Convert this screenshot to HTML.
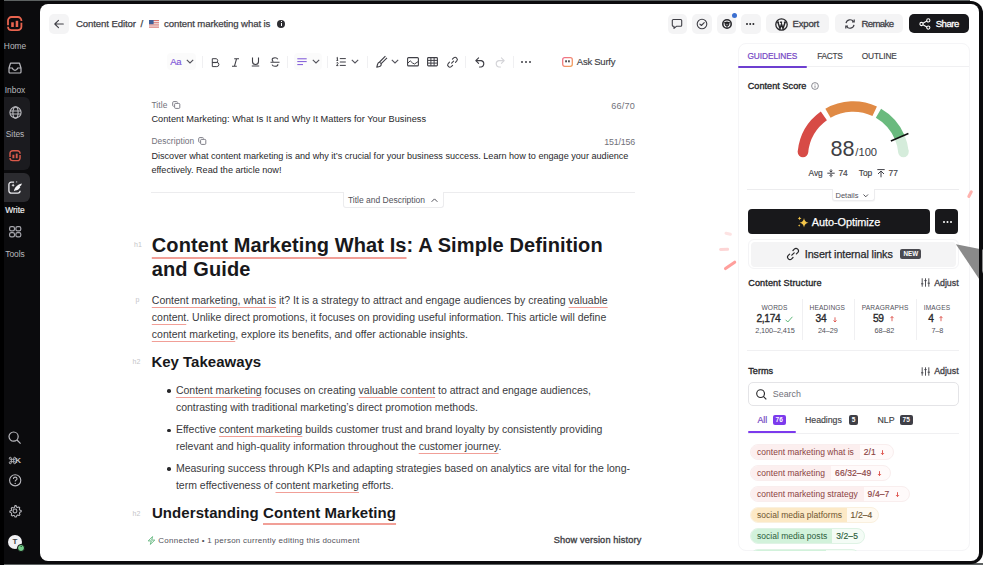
<!DOCTYPE html>
<html><head><meta charset="utf-8">
<style>
*{box-sizing:border-box;margin:0;padding:0}
html,body{width:983px;height:565px;overflow:hidden;background:#fff;font-family:"Liberation Sans",sans-serif;-webkit-font-smoothing:antialiased}
.a{position:absolute}
.t{position:absolute;white-space:nowrap;line-height:12px}
svg{position:absolute;overflow:visible}
#strip-top{left:0;top:0;width:970px;height:2px;background:#5d6262}
#strip-bot{left:0;top:563px;width:983px;height:2px;background:#5d6262}
#frame{left:-20px;top:1px;width:1003px;height:563px;background:#0b0b0d;border-radius:12px}
#blk{left:0;top:0;width:4px;height:565px;background:#000}
#panel{left:39.5px;top:4px;width:939.5px;height:557px;background:#fff;border-radius:8px}
.lbl{font-size:8.4px;color:#71717a;letter-spacing:0.1px}
.tag{font-size:7px;color:#c4c4c8}
.h1{font-size:20px;font-weight:700;line-height:24.5px;color:#18181b;white-space:nowrap;letter-spacing:0.1px}
.h2{font-size:15px;font-weight:700;line-height:20px;color:#18181b;white-space:nowrap}
.para{font-size:10.5px;line-height:17.2px;color:#3a3a40;white-space:nowrap}
.u{text-decoration:underline;text-decoration-skip-ink:none;text-decoration-color:#f19f97;text-underline-offset:2.6px;text-decoration-thickness:1.3px}
.h1 .u,.h2 .u{text-underline-offset:5px;text-decoration-thickness:1.5px}
.bul{width:3.6px;height:3.6px;border-radius:50%;background:#27272a}
.stl{font-size:6.6px;color:#52525b;letter-spacing:0.15px}
.stn{font-size:10.2px;color:#27272a;top:313.4px;letter-spacing:-0.3px;-webkit-text-stroke:0.35px #27272a}
.str{font-size:7.3px;color:#52525b;top:324.8px;letter-spacing:-0.1px}
.bdg{height:10.5px;border-radius:2px;color:#fff;font-size:6.5px;font-weight:700;text-align:center;line-height:10.5px}
.side{color:#b9b9be;font-size:8.4px;text-align:center;width:30px;left:0}
</style></head><body>
<div id="strip-top" class="a"></div>
<div id="strip-bot" class="a"></div>
<div id="frame" class="a"></div>
<div id="blk" class="a"></div>

<!-- SIDEBAR -->
<div id="sidebar">
<!-- logo -->
<svg style="left:7px;top:16px" width="16" height="16" viewBox="0 0 16 16">
<path d="M1 10.8A3.5 3.5 0 0 0 4.5 14.2H10.9A3.5 3.5 0 0 0 14.4 10.7V6.7M14.4 5.1V4.5A3.5 3.5 0 0 0 10.9 1H4.5A3.5 3.5 0 0 0 1 4.5V9.2" fill="none" stroke="#e8644f" stroke-width="1.8"/>
<rect x="4.2" y="6.3" width="2.6" height="4.7" fill="#e8644f"/><rect x="8.7" y="4.8" width="2.5" height="6.2" fill="#e8644f"/>
</svg>
<div class="t side" style="top:40px">Home</div>
<svg style="left:8px;top:62px" width="14" height="12" viewBox="0 0 14 12">
<path d="M1 6 L2.5 1.2 H11.5 L13 6 V10 a1 1 0 0 1-1 1 H2 a1 1 0 0 1-1-1Z M1 6 H4.3 Q5 8.3 7 8.3 Q9 8.3 9.7 6 H13" fill="none" stroke="#b9b9be" stroke-width="1.2" stroke-linejoin="round"/>
</svg>
<div class="t side" style="top:84px">Inbox</div>
<div class="a" style="left:4px;top:97px;width:26px;height:73px;background:#1b1b1f;border-radius:0 6px 6px 0"></div>
<svg style="left:9px;top:105.5px" width="13" height="13" viewBox="0 0 13 13">
<circle cx="6.5" cy="6.5" r="5.6" fill="none" stroke="#b9b9be" stroke-width="1.1"/>
<ellipse cx="6.5" cy="6.5" rx="2.6" ry="5.6" fill="none" stroke="#b9b9be" stroke-width="1.1"/>
<path d="M1 5H12M1 8H12" stroke="#b9b9be" stroke-width="1.1"/>
</svg>
<div class="t side" style="top:128px">Sites</div>
<svg style="left:8.5px;top:149.8px" width="12.5" height="12" viewBox="0 0 16 16">
<path d="M1 10.8A3.5 3.5 0 0 0 4.5 14.2H10.9A3.5 3.5 0 0 0 14.4 10.7V6.7M14.4 5.1V4.5A3.5 3.5 0 0 0 10.9 1H4.5A3.5 3.5 0 0 0 1 4.5V9.2" fill="none" stroke="#d9594a" stroke-width="1.9"/>
<rect x="4.2" y="6.3" width="2.6" height="4.7" fill="#d9594a"/><rect x="8.7" y="4.8" width="2.5" height="6.2" fill="#d9594a"/>
</svg>
<div class="a" style="left:4px;top:173px;width:25.5px;height:29px;background:#2b2b2f;border-radius:0 6px 6px 0"></div>
<svg style="left:8px;top:181px" width="15" height="13" viewBox="0 0 15 13">
<path d="M6.1 1.2H3.2a2.3 2.3 0 0 0-2.3 2.3V9.8a2.3 2.3 0 0 0 2.3 2.3H9.8a2.3 2.3 0 0 0 2.3-2.3V10" fill="none" stroke="#ececef" stroke-width="1.3"/>
<path d="M5.1 2.6Q5.4 4 6.8 4.3Q5.4 4.6 5.1 6Q4.8 4.6 3.4 4.3Q4.8 4 5.1 2.6Z" fill="#ececef"/>
<circle cx="8.6" cy="0.9" r="0.8" fill="#8f8f94"/>
<path d="M5.9 10.3C6.3 7.5 8.5 3.8 13.9 2.6C13.6 4.2 12.8 5.2 11.6 5.6L12.4 5.9C11.5 7.8 9.5 9.4 7.2 9.6Z" fill="#f4f4f6"/>
</svg>
<div class="t side" style="top:204px;color:#f4f4f5;-webkit-text-stroke:0.15px #f4f4f5">Write</div>
<svg style="left:8.7px;top:225.6px" width="12.4" height="11.6" viewBox="0 0 12.4 11.6">
<rect x="0.6" y="0.6" width="4.9" height="4.2" rx="1.6" fill="none" stroke="#a6a6ac" stroke-width="1.2"/>
<rect x="6.9" y="0.6" width="4.9" height="4.2" rx="1.6" fill="none" stroke="#a6a6ac" stroke-width="1.2"/>
<rect x="0.6" y="6.7" width="4.9" height="4.2" rx="1.6" fill="none" stroke="#a6a6ac" stroke-width="1.2"/>
<rect x="6.9" y="6.7" width="4.9" height="4.2" rx="1.6" fill="none" stroke="#a6a6ac" stroke-width="1.2"/>
</svg>
<div class="t side" style="top:247.5px">Tools</div>

<svg style="left:8px;top:431px" width="14" height="14" viewBox="0 0 14 14">
<circle cx="5.6" cy="5.6" r="4.6" fill="none" stroke="#b9b9be" stroke-width="1.2"/>
<path d="M9 9L12.6 12.6" stroke="#b9b9be" stroke-width="1.2"/>
</svg>
<svg style="left:8.5px;top:456.5px" width="7" height="7" viewBox="0 0 7 7"><path d="M2.3 2.3H4.7V4.7H2.3ZM2.3 2.3V1.5A1 1 0 1 0 1.5 2.3H2.3M4.7 2.3H5.5A1 1 0 1 0 4.7 1.5V2.3M4.7 4.7V5.5A1 1 0 1 0 5.5 4.7H4.7M2.3 4.7H1.5A1 1 0 1 0 2.3 5.5V4.7" fill="none" stroke="#c4c4c8" stroke-width="0.9"/></svg>
<div class="t" style="left:15.2px;top:454.5px;font-size:8px;font-weight:700;color:#c4c4c8">K</div>
<svg style="left:8.5px;top:474px" width="13" height="13" viewBox="0 0 13 13">
<circle cx="6.2" cy="6.3" r="5.6" fill="none" stroke="#b9b9be" stroke-width="1.1"/>
<path d="M4.4 5 Q4.4 3.1 6.2 3.1 Q8 3.1 8 4.7 Q8 5.8 6.8 6.3 Q6.2 6.6 6.2 7.6" fill="none" stroke="#b9b9be" stroke-width="1.1"/>
<circle cx="6.2" cy="9.4" r="0.7" fill="#b9b9be"/>
</svg>
<svg style="left:7.7px;top:504px" width="14" height="14" viewBox="0 0 24 24">
<path d="M12 2.5l2 .3.6 2.4 1.5.8 2.3-1 1.7 1.4-.6 2.5.7 1.5 2.4.8v2.2l-2.4.9-.6 1.5.9 2.4-1.5 1.6-2.4-.8-1.5.8-.8 2.4-2.2.2-1-2.3-1.6-.6-2.3 1-1.6-1.4.8-2.4-.7-1.5-2.4-.9v-2.2l2.4-.9.7-1.5-.9-2.4 1.5-1.5 2.4.9 1.5-.7.9-2.4z" fill="none" stroke="#b9b9be" stroke-width="1.8" stroke-linejoin="round"/>
<circle cx="12" cy="12" r="3.3" fill="none" stroke="#b9b9be" stroke-width="1.8"/>
</svg>
<div class="a" style="left:8px;top:534.5px;width:14px;height:14px;border-radius:50%;background:#f2f2f4"></div>
<div class="t" style="left:8px;top:535.5px;width:14px;text-align:center;font-size:8px;font-weight:700;color:#444">T</div>
<div class="a" style="left:16.6px;top:543.6px;width:8.6px;height:8.6px;border-radius:50%;background:#74cd8a;border:0.6px solid #0b0b0d"></div><div class="a" style="left:19.6px;top:546.3px;width:2.6px;height:3.4px;border-top:1px solid #2d6a3c;border-left:0.9px solid transparent"></div>
</div>

<div id="panel" class="a"></div>

<!-- HEADER -->
<div id="header">
<div class="a" style="left:49px;top:14px;width:20px;height:20px;background:#f4f4f5;border-radius:5px"></div>
<svg style="left:53px;top:18px" width="12" height="12" viewBox="0 0 12 12">
<path d="M10.3 6H1.9M5.5 2.3L1.8 6L5.5 9.7" fill="none" stroke="#3f3f46" stroke-width="1.1" stroke-linecap="round" stroke-linejoin="round"/>
</svg>
<div class="t" style="left:76px;top:18px;font-size:9.6px;color:#3f3f46;letter-spacing:-0.1px;-webkit-text-stroke:0.25px #3f3f46">Content Editor</div>
<div class="t" style="left:140.5px;top:18px;font-size:9.6px;color:#3f3f46;-webkit-text-stroke:0.25px #3f3f46">/</div>
<svg style="left:149px;top:19.8px" width="10" height="7.7" viewBox="0 0 10 7.7">
<rect width="10" height="7.7" fill="#f3f3f3"/>
<rect y="0" width="10" height="1.1" fill="#d8736f"/><rect y="2.2" width="10" height="1.1" fill="#d8736f"/><rect y="4.4" width="10" height="1.1" fill="#d8736f"/><rect y="6.6" width="10" height="1.1" fill="#d8736f"/>
<rect width="4.6" height="4.2" fill="#3f5f98"/>
</svg>
<div class="t" style="left:164px;top:18px;font-size:9.6px;color:#3f3f46;letter-spacing:-0.1px;-webkit-text-stroke:0.25px #3f3f46">content marketing what is</div>
<div class="a" style="left:277.3px;top:19.9px;width:8.2px;height:8.2px;border-radius:50%;background:#2f2f33"></div>
<div class="a" style="left:280.8px;top:23.2px;width:1.3px;height:3.2px;background:#fff"></div>
<div class="a" style="left:280.8px;top:21.3px;width:1.3px;height:1.2px;background:#fff"></div>

<div class="a" style="left:667.5px;top:14.3px;width:19.5px;height:19.5px;background:#f4f4f5;border-radius:5px"></div>
<svg style="left:671px;top:18px" width="12" height="12" viewBox="0 0 12 12">
<path d="M1.3 2.5a1 1 0 0 1 1-1h7.4a1 1 0 0 1 1 1v4.8a1 1 0 0 1-1 1H5.4L3 10.4V8.3H2.3a1 1 0 0 1-1-1Z" fill="none" stroke="#3f3f46" stroke-width="1.1" stroke-linejoin="round"/>
</svg>
<div class="a" style="left:692px;top:14.3px;width:19.5px;height:19.5px;background:#f4f4f5;border-radius:5px"></div>
<svg style="left:696px;top:18px" width="12" height="12" viewBox="0 0 12 12">
<circle cx="6" cy="6" r="4.8" fill="none" stroke="#3f3f46" stroke-width="1.1"/>
<path d="M3.9 6.1L5.4 7.5L8.2 4.6" fill="none" stroke="#3f3f46" stroke-width="1.1" stroke-linecap="round" stroke-linejoin="round"/>
</svg>
<div class="a" style="left:716.5px;top:14.3px;width:19.5px;height:19.5px;background:#f4f4f5;border-radius:5px"></div>
<svg style="left:720.5px;top:18.3px" width="12" height="12" viewBox="0 0 12 12">
<circle cx="6" cy="6" r="4.2" fill="none" stroke="#2a2a2e" stroke-width="1.6"/>
<circle cx="6" cy="6" r="1.8" fill="none" stroke="#2a2a2e" stroke-width="1.2"/>
<path d="M3 4.5L6 6L9 4.5M6 6V9.8" stroke="#2a2a2e" stroke-width="1"/>
</svg>
<div class="a" style="left:732.3px;top:12.5px;width:5px;height:5px;border-radius:50%;background:#3b6fd0"></div>
<div class="a" style="left:741px;top:14.3px;width:19.5px;height:19.5px;background:#f4f4f5;border-radius:5px"></div>
<div class="a" style="left:746.3px;top:23px;width:2.2px;height:2.2px;border-radius:50%;background:#27272a;box-shadow:3.2px 0 0 #27272a,6.4px 0 0 #27272a"></div>

<div class="a" style="left:765.6px;top:14.3px;width:63.4px;height:19px;background:#f4f4f5;border-radius:5px"></div>
<svg style="left:774.8px;top:17.5px" width="13" height="13" viewBox="0 0 13 13">
<circle cx="6.5" cy="6.5" r="5.7" fill="none" stroke="#27272a" stroke-width="1.3"/>
<path d="M2.9 4.2L5 10.4L6.5 6.3L8 10.4L10.1 4.2M2.1 4.2H4.1M5.1 4.2H7.1M8.9 4.2H10.9" fill="none" stroke="#27272a" stroke-width="1.5"/>
</svg>
<div class="t" style="left:792.5px;top:18px;font-size:9.6px;color:#3f3f46;letter-spacing:-0.2px;-webkit-text-stroke:0.3px #3f3f46">Export</div>

<div class="a" style="left:834.5px;top:14.3px;width:68.7px;height:19px;background:#f4f4f5;border-radius:5px"></div>
<svg style="left:844px;top:18px" width="12" height="12" viewBox="0 0 12 12">
<path d="M2 5.2A4.2 4.2 0 0 1 9.6 3.6M10 6.8A4.2 4.2 0 0 1 2.4 8.4" fill="none" stroke="#3f3f46" stroke-width="1.2"/>
<path d="M8 3.8H10.2V1.6M4 8.2H1.8V10.4" fill="none" stroke="#3f3f46" stroke-width="1.2"/>
</svg>
<div class="t" style="left:861.4px;top:18px;font-size:9.6px;color:#3f3f46;letter-spacing:-0.6px;-webkit-text-stroke:0.3px #3f3f46">Remake</div>

<div class="a" style="left:908.8px;top:14.3px;width:60.5px;height:19px;background:#18181b;border-radius:5px"></div>
<svg style="left:919px;top:18px" width="12" height="12" viewBox="0 0 12 12">
<circle cx="9.3" cy="2.4" r="1.6" fill="none" stroke="#fff" stroke-width="1.1"/>
<circle cx="2.5" cy="6" r="1.6" fill="none" stroke="#fff" stroke-width="1.1"/>
<circle cx="9.3" cy="9.6" r="1.6" fill="none" stroke="#fff" stroke-width="1.1"/>
<path d="M3.9 5.2L7.9 3.1M3.9 6.8L7.9 8.9" stroke="#fff" stroke-width="1.1"/>
</svg>
<div class="t" style="left:935.7px;top:18px;font-size:9.6px;color:#fff;letter-spacing:-0.5px;-webkit-text-stroke:0.3px #fff">Share</div>
</div>

<!-- TOOLBAR -->
<div id="toolbar">
<div class="a" style="left:167.3px;top:53.3px;width:29px;height:16.5px;background:#fbfbfb;border-radius:4px"></div>
<div class="t" style="left:170.3px;top:55.7px;font-size:9.5px;color:#7d55d8;letter-spacing:-0.3px;-webkit-text-stroke:0.15px #7d55d8">Aa</div>
<svg style="left:186px;top:59px" width="8" height="5" viewBox="0 0 8 5"><path d="M0.8 0.8L4 4L7.2 0.8" fill="none" stroke="#52525b" stroke-width="1.1"/></svg>
<div class="a" style="left:201.8px;top:55.5px;width:1px;height:12px;background:#f0f0f2"></div>
<!-- B -->
<svg style="left:211px;top:57.5px" width="10" height="9" viewBox="0 0 10 9">
<path d="M1.3 0.7H5.2a2 2 0 0 1 0 3.9H1.3ZM1.3 4.4H5.8a2.1 2.1 0 0 1 0 4.2H1.3Z" fill="none" stroke="#3f3f46" stroke-width="1.0" stroke-linejoin="round"/>
</svg>
<!-- I -->
<svg style="left:231px;top:57.5px" width="9" height="9" viewBox="0 0 9 9">
<path d="M3.2 0.7H8M1 8.3H5.8M5.6 0.7L3.4 8.3" fill="none" stroke="#3f3f46" stroke-width="1.1"/>
</svg>
<!-- U -->
<svg style="left:251px;top:57.3px" width="9" height="10" viewBox="0 0 9 10">
<path d="M1.5 0.5V4.5a3 3 0 0 0 6 0V0.5M0.8 9H8.2" fill="none" stroke="#3f3f46" stroke-width="1.1"/>
</svg>
<!-- S -->
<svg style="left:269.5px;top:57.3px" width="10" height="10" viewBox="0 0 10 10">
<path d="M7.8 2.2C7.3 1.2 6.3 0.7 5 0.7C3.3 0.7 2.2 1.5 2.2 2.8C2.2 3.6 2.6 4.1 3.3 4.5M7.9 7.2C7.9 8.6 6.7 9.3 5 9.3C3.5 9.3 2.4 8.6 2 7.6M0.5 5.3H9.5" fill="none" stroke="#3f3f46" stroke-width="1.1"/>
</svg>
<div class="a" style="left:287.3px;top:55.5px;width:1px;height:12px;background:#f0f0f2"></div>
<div class="a" style="left:293.6px;top:53.3px;width:28.4px;height:16.5px;background:#fbfbfb;border-radius:4px"></div>
<svg style="left:296.6px;top:57.8px" width="10" height="8" viewBox="0 0 10 8">
<path d="M0.3 0.8H9.7M0.3 3.6H9.7M0.3 6.6H6" stroke="#7d55d8" stroke-width="1.0"/>
</svg>
<svg style="left:311.5px;top:59px" width="8" height="5" viewBox="0 0 8 5"><path d="M0.8 0.8L4 4L7.2 0.8" fill="none" stroke="#52525b" stroke-width="1.1"/></svg>
<div class="a" style="left:327.3px;top:55.5px;width:1px;height:12px;background:#f0f0f2"></div>
<!-- list -->
<svg style="left:336.3px;top:57px" width="10" height="10" viewBox="0 0 10 10">
<path d="M0.6 0.9L1.4 0.4V3.4M0.4 3.4H2.2M0.5 6.2Q0.8 5.4 1.5 5.5Q2.3 5.7 2 6.6L0.5 8.6H2.3M3.8 1.6H9.8M3.8 5H9.8M3.8 8.4H9.8" fill="none" stroke="#3f3f46" stroke-width="1"/>
</svg>
<svg style="left:351px;top:59px" width="8" height="5" viewBox="0 0 8 5"><path d="M0.8 0.8L4 4L7.2 0.8" fill="none" stroke="#52525b" stroke-width="1.1"/></svg>
<div class="a" style="left:367.3px;top:55.5px;width:1px;height:12px;background:#f0f0f2"></div>
<!-- pen -->
<svg style="left:375.5px;top:56.5px" width="12" height="11" viewBox="0 0 12 11">
<path d="M11 0.8L5.2 6.6L3.6 5L9.4 -0.8M3.6 5Q2 5.5 1.5 7.5L0.8 10.2L3.6 9.5Q5.5 9 5.2 6.6" fill="none" stroke="#3f3f46" stroke-width="1.1" stroke-linejoin="round"/>
</svg>
<svg style="left:391px;top:59px" width="8" height="5" viewBox="0 0 8 5"><path d="M0.8 0.8L4 4L7.2 0.8" fill="none" stroke="#52525b" stroke-width="1.1"/></svg>
<!-- image -->
<svg style="left:407px;top:57px" width="12" height="9.5" viewBox="0 0 12 9.5">
<rect x="0.6" y="0.6" width="10.8" height="8.3" rx="1" fill="none" stroke="#3f3f46" stroke-width="1.1"/>
<path d="M0.8 6.2L3.2 3.8Q5.5 6.5 7.5 7L11.2 4.5" fill="none" stroke="#3f3f46" stroke-width="1"/>
</svg>
<!-- table -->
<svg style="left:427px;top:57px" width="11" height="9.5" viewBox="0 0 11 9.5">
<rect x="0.6" y="0.6" width="9.8" height="8.3" rx="0.8" fill="none" stroke="#3f3f46" stroke-width="1.1"/>
<path d="M0.6 3.4H10.4M0.6 6.1H10.4M3.9 0.6V8.9M7.1 0.6V8.9" stroke="#3f3f46" stroke-width="1"/>
</svg>
<!-- link -->
<svg style="left:446.8px;top:56.5px" width="11" height="10.5" viewBox="0 0 11 10.5">
<path d="M4.6 6.2L6.6 4.2M5.4 2.2L6.7 0.9a2.2 2.2 0 0 1 3.1 3.1L8.5 5.3M5.6 8.3L4.3 9.6a2.2 2.2 0 0 1-3.1-3.1L2.5 5.2" fill="none" stroke="#3f3f46" stroke-width="1.1" stroke-linecap="round"/>
</svg>
<div class="a" style="left:464.7px;top:55.5px;width:1px;height:12px;background:#f0f0f2"></div>
<!-- undo -->
<svg style="left:474.5px;top:56.5px" width="11" height="10.5" viewBox="0 0 11 10.5">
<path d="M3.6 0.8L0.8 3.6L3.6 6.4M1 3.6H6.3a3.3 3.3 0 0 1 0 6.4H4.5" fill="none" stroke="#3f3f46" stroke-width="1.1" stroke-linejoin="round" stroke-linecap="round"/>
</svg>
<svg style="left:493.5px;top:56.5px" width="11" height="10.5" viewBox="0 0 11 10.5">
<path d="M7.4 0.8L10.2 3.6L7.4 6.4M10 3.6H4.7a3.3 3.3 0 0 0 0 6.4H6.5" fill="none" stroke="#d4d4d8" stroke-width="1.1" stroke-linejoin="round" stroke-linecap="round"/>
</svg>
<div class="a" style="left:512.5px;top:55.5px;width:1px;height:12px;background:#f0f0f2"></div>
<div class="a" style="left:520.6px;top:60.8px;width:2px;height:2px;border-radius:50%;background:#3f3f46;box-shadow:4px 0 0 #3f3f46,8px 0 0 #3f3f46"></div>
<!-- surfy -->
<svg style="left:561.5px;top:57px" width="11" height="10" viewBox="0 0 11 10">
<defs><linearGradient id="sg" x1="0" y1="0" x2="1" y2="1"><stop offset="0" stop-color="#ef6b8a"/><stop offset="1" stop-color="#f2a45a"/></linearGradient></defs>
<rect x="0.7" y="0.7" width="9.6" height="8.6" rx="2" fill="#fff" stroke="url(#sg)" stroke-width="1.3"/>
<rect x="3.3" y="3.3" width="1.5" height="2" fill="#27272a"/><rect x="6.2" y="3.3" width="1.5" height="2" fill="#27272a"/>
</svg>
<div class="t" style="left:576.8px;top:55.8px;font-size:9.5px;color:#3f3f46;letter-spacing:-0.25px;-webkit-text-stroke:0.15px #3f3f46">Ask Surfy</div>
</div>

<!-- EDITOR -->
<div id="editor">
<div class="t lbl" style="left:151.4px;top:98.7px">Title</div>
<svg style="left:171.5px;top:100.8px" width="8.5" height="8" viewBox="0 0 8.5 8"><rect x="2.6" y="2.4" width="5.2" height="5" rx="1" fill="none" stroke="#71717a" stroke-width="0.9"/><path d="M1.6 5.4a1 1 0 0 1-0.9-1V1.6a1 1 0 0 1 1-1h2.8a1 1 0 0 1 1 0.9" fill="none" stroke="#71717a" stroke-width="0.9"/></svg>
<div class="t lbl" style="left:560px;width:75px;text-align:right;top:99.5px;font-size:9.1px;letter-spacing:0.2px">66/70</div>
<div class="t" style="left:151.4px;top:113px;font-size:9.2px;color:#27272a;letter-spacing:0.03px">Content Marketing: What Is It and Why It Matters for Your Business</div>
<div class="t lbl" style="left:151.4px;top:135.3px">Description</div>
<svg style="left:198.3px;top:137.4px" width="8.5" height="8" viewBox="0 0 8.5 8"><rect x="2.6" y="2.4" width="5.2" height="5" rx="1" fill="none" stroke="#71717a" stroke-width="0.9"/><path d="M1.6 5.4a1 1 0 0 1-0.9-1V1.6a1 1 0 0 1 1-1h2.8a1 1 0 0 1 1 0.9" fill="none" stroke="#71717a" stroke-width="0.9"/></svg>
<div class="t lbl" style="left:560px;width:75px;text-align:right;top:136.2px;font-size:8.9px;letter-spacing:-0.2px">151/156</div>
<div class="t" style="left:151.4px;top:149.8px;font-size:9.1px;color:#27272a;letter-spacing:0px">Discover what content marketing is and why it’s crucial for your business success. Learn how to engage your audience</div>
<div class="t" style="left:151.4px;top:164.3px;font-size:9.1px;color:#27272a;letter-spacing:0px">effectively. Read the article now!</div>
<div class="a" style="left:151px;top:192px;width:484px;height:1px;background:#ececee"></div>
<div class="a" style="left:342.6px;top:192px;width:101.4px;height:15.5px;background:#fff;border:1px solid #ececee;border-top:none;border-radius:0 0 3px 3px"></div>
<div class="t" style="left:347.9px;top:193.9px;font-size:8.5px;color:#52525b">Title and Description</div>
<svg style="left:430.5px;top:197.5px" width="7" height="4.5" viewBox="0 0 7 4.5"><path d="M0.6 3.8L3.5 0.9L6.4 3.8" fill="none" stroke="#52525b" stroke-width="1"/></svg>

<div class="t tag" style="left:134px;top:239px">h1</div>
<div class="a h1" style="left:151.8px;top:232.5px">
<span class="u">Content Marketing What Is</span>: A Simple Definition<br>and Guide</div>

<div class="t tag" style="left:135.5px;top:294px">p</div>
<div class="a para" style="left:151.8px;top:291.5px">
<span class="u">Content marketing, what is</span> it? It is a strategy to attract and engage audiences by creating <span class="u">valuable</span><br><span class="u">content</span>. Unlike direct promotions, it focuses on providing useful information. This article will define<br><span class="u">content marketing</span>, explore its benefits, and offer actionable insights.</div>

<div class="t tag" style="left:132.5px;top:356px">h2</div>
<div class="t h2" style="left:151.4px;top:352px">Key Takeaways</div>

<div class="a bul" style="left:167.1px;top:389.4px"></div>
<div class="a para" style="left:175.9px;top:381.9px">
<span class="u">Content marketing</span> focuses on creating <span class="u">valuable content</span> to attract and engage audiences,<br>contrasting with traditional marketing’s direct promotion methods.</div>
<div class="a bul" style="left:167.1px;top:428.6px"></div>
<div class="a para" style="left:175.9px;top:421.1px">
Effective <span class="u">content marketing</span> builds customer trust and brand loyalty by consistently providing<br>relevant and high-quality information throughout the <span class="u">customer journey</span>.</div>
<div class="a bul" style="left:167.1px;top:467px"></div>
<div class="a para" style="left:175.9px;top:459.5px">
Measuring success through KPIs and adapting strategies based on analytics are vital for the long-<br>term effectiveness of <span class="u">content marketing</span> efforts.</div>

<div class="t tag" style="left:132.5px;top:507.5px">h2</div>
<div class="t h2" style="left:151.9px;top:503.3px;letter-spacing:0.08px">Understanding <span class="u">Content Marketing</span></div>

<svg style="left:146.5px;top:536px" width="9" height="9" viewBox="0 0 9 9"><path d="M5.6 0.6L1.2 4.9H4.3L3.3 8.4L7.8 4.1H4.7Z" fill="none" stroke="#5fb47a" stroke-width="0.9" stroke-linejoin="round"/></svg>
<div class="t" style="left:158.3px;top:534.8px;font-size:8px;color:#52525b;letter-spacing:0.26px">Connected • 1 person currently editing this document</div>
<div class="t" style="left:553.7px;top:534.4px;font-size:9.2px;color:#3f3f46;letter-spacing:0.15px;-webkit-text-stroke:0.35px #3f3f46">Show version history</div>
</div>

<!-- RIGHT -->
<div id="right">
<div class="a" style="left:737.5px;top:43.3px;width:232px;height:508px;border:1px solid #f5f5f7;border-radius:8px;background:#fff"></div>
<div class="t" style="left:747.4px;top:50.4px;font-size:8.3px;color:#7446c4;letter-spacing:-0.05px;-webkit-text-stroke:0.2px #7446c4">GUIDELINES</div>
<div class="t" style="left:817.3px;top:50.4px;font-size:8.3px;color:#3f3f46;letter-spacing:-0.3px;-webkit-text-stroke:0.15px #3f3f46">FACTS</div>
<div class="t" style="left:861.8px;top:50.4px;font-size:8.3px;color:#3f3f46;letter-spacing:-0.15px;-webkit-text-stroke:0.15px #3f3f46">OUTLINE</div>
<div class="a" style="left:738.5px;top:66px;width:230px;height:1px;background:#f0f0f2"></div>
<div class="a" style="left:737.7px;top:65.5px;width:69.7px;height:2px;background:#6d3fd0;border-radius:1px"></div>

<div class="t" style="left:747.7px;top:79.7px;font-size:9.1px;color:#27272a;letter-spacing:0.05px;-webkit-text-stroke:0.35px #27272a">Content Score</div>
<svg style="left:810.7px;top:81.6px" width="8" height="8" viewBox="0 0 8 8"><circle cx="4" cy="4" r="3.4" fill="none" stroke="#71717a" stroke-width="0.8"/><path d="M4 3.5V5.8" stroke="#71717a" stroke-width="0.8"/><circle cx="4" cy="2.3" r="0.45" fill="#71717a"/></svg>

<svg style="left:790px;top:95px" width="130" height="90" viewBox="0 0 130 90">
<path d="M12.94 57.07A50.5 50.5 0 0 1 33.87 20.89" fill="none" stroke="#d74b46" stroke-width="10.5"/>
<circle cx="12.94" cy="57.07" r="5.25" fill="#d74b46"/>
<path d="M37.95 18.27A50.5 50.5 0 0 1 84.70 16.31" fill="none" stroke="#e08a45" stroke-width="10.5"/>
<path d="M88.45 18.27A50.5 50.5 0 0 1 109.69 42.27" fill="none" stroke="#6aba7e" stroke-width="10.5"/>
<path d="M109.69 42.27A50.5 50.5 0 0 1 113.46 57.07" fill="none" stroke="#d5ecdb" stroke-width="10.5"/>
<circle cx="113.46" cy="57.07" r="5.25" fill="#d5ecdb"/>
<path d="M100.9 46L118.4 38.6" stroke="#111" stroke-width="1.6"/>
</svg>
<div class="t" style="left:830.6px;top:137px;font-size:21.6px;line-height:24px;color:#404045">88</div>
<div class="t" style="left:855.3px;top:145px;font-size:11.2px;line-height:14px;color:#3a3a3f">/100</div>

<div class="t" style="left:808.6px;top:167.3px;font-size:8.4px;color:#3f3f46;letter-spacing:-0.1px;-webkit-text-stroke:0.15px #3f3f46">Avg</div>
<svg style="left:826.8px;top:169px" width="8" height="8.5" viewBox="0 0 8 8.5"><path d="M0.3 4.2H7.7M4 0.3V3M2.6 1.8L4 3.1L5.4 1.8M4 5.5V8.2M2.6 6.8L4 5.4L5.4 6.8" fill="none" stroke="#3f3f46" stroke-width="1"/></svg>
<div class="t" style="left:838.4px;top:167.3px;font-size:8.4px;color:#3f3f46;-webkit-text-stroke:0.15px #3f3f46">74</div>
<div class="t" style="left:858.8px;top:167.3px;font-size:8.4px;color:#3f3f46;letter-spacing:-0.05px;-webkit-text-stroke:0.15px #3f3f46">Top</div>
<svg style="left:876.8px;top:169px" width="8" height="8.5" viewBox="0 0 8 8.5"><path d="M0.3 0.6H7.7M4 2V8.3M1 5L4 2L7 5" fill="none" stroke="#3f3f46" stroke-width="1"/></svg>
<div class="t" style="left:888.5px;top:167.3px;font-size:8.4px;color:#3f3f46;-webkit-text-stroke:0.15px #3f3f46">77</div>

<div class="a" style="left:747.3px;top:189px;width:211.5px;height:1px;background:#ececee"></div>
<div class="a" style="left:832.4px;top:189px;width:42.3px;height:12.3px;background:#fff;border:1px solid #ececee;border-top:none;border-radius:0 0 3px 3px;box-shadow:0 1px 1px rgba(0,0,0,0.04)"></div>
<div class="t" style="left:835.5px;top:189.7px;font-size:7.5px;color:#52525b">Details</div>
<svg style="left:863.3px;top:194px" width="5.5" height="3.5" viewBox="0 0 5.5 3.5"><path d="M0.5 0.5L2.75 2.8L5 0.5" fill="none" stroke="#3f3f46" stroke-width="0.9"/></svg>

<div class="a" style="left:747.8px;top:209.3px;width:182.2px;height:24.4px;background:#18181b;border-radius:4px"></div>
<svg style="left:796.5px;top:215.5px" width="12" height="12" viewBox="0 0 12 12">
<path d="M7 2Q7.5 6 11.5 6.8Q7.5 7.6 7 11.6Q6.5 7.6 2.5 6.8Q6.5 6 7 2Z" fill="#f3c54a"/>
<path d="M2.6 0.5Q2.8 2.2 4.5 2.4Q2.8 2.6 2.6 4.3Q2.4 2.6 0.7 2.4Q2.4 2.2 2.6 0.5Z" fill="#f3c54a"/>
<path d="M2.2 8.3Q2.35 9.3 3.3 9.5Q2.35 9.7 2.2 10.7Q2.05 9.7 1.1 9.5Q2.05 9.3 2.2 8.3Z" fill="#f3c54a"/>
</svg>
<div class="t" style="left:811.8px;top:215.8px;font-size:10.9px;color:#fff;letter-spacing:-0.05px;-webkit-text-stroke:0.25px #fff">Auto-Optimize</div>
<div class="a" style="left:934.8px;top:209.3px;width:23.7px;height:24.4px;background:#18181b;border-radius:4px"></div>
<div class="a" style="left:942.5px;top:220.6px;width:2px;height:2px;border-radius:50%;background:#fff;box-shadow:3.5px 0 0 #fff,7px 0 0 #fff"></div>

<div class="a" style="left:747.7px;top:239.2px;width:211.1px;height:29.8px;border:1px solid #f4f4f6;border-radius:6px"></div>
<div class="a" style="left:750.5px;top:241.6px;width:205.2px;height:25px;background:#f4f4f5;border-radius:4px"></div>
<svg style="left:786.5px;top:248px" width="12" height="12" viewBox="0 0 12 12">
<path d="M4.8 7.2L7.2 4.8M6 2.5L7.3 1.2a2.4 2.4 0 0 1 3.4 3.4L9.4 5.9M6 9.5L4.7 10.8a2.4 2.4 0 0 1-3.4-3.4L2.6 6.1" fill="none" stroke="#27272a" stroke-width="1.2" stroke-linecap="round"/>
</svg>
<div class="t" style="left:804.8px;top:248px;font-size:10.8px;color:#27272a;letter-spacing:-0.1px;-webkit-text-stroke:0.25px #27272a">Insert internal links</div>
<div class="a" style="left:900.3px;top:249px;width:21px;height:10.1px;background:#4a4a50;border-radius:2px"></div>
<div class="t" style="left:900.3px;top:248.4px;width:21px;text-align:center;font-size:6.3px;font-weight:700;color:#fff;letter-spacing:-0.1px;line-height:11px">NEW</div>

<div class="t" style="left:748.2px;top:276.7px;font-size:9.1px;color:#27272a;letter-spacing:0.13px;-webkit-text-stroke:0.35px #27272a">Content Structure</div>
<svg class="adj" style="left:920.5px;top:278.3px" width="9" height="9" viewBox="0 0 9 9"><path d="M1.2 0.3V8.7M4.5 0.3V8.7M7.8 0.3V8.7M0 5.8H2.4M3.3 2.6H5.7M6.6 5.2H9" stroke="#3f3f46" stroke-width="0.9"/></svg>
<div class="t" style="left:934.2px;top:276.7px;font-size:8.9px;color:#3f3f46;letter-spacing:-0.05px;-webkit-text-stroke:0.3px #3f3f46">Adjust</div>

<div class="t stl" style="left:761.5px;top:301.5px">WORDS</div>
<div class="t stn" style="left:756.4px">2,174</div>
<svg style="left:784.5px;top:315.5px" width="8" height="7" viewBox="0 0 8 7"><path d="M0.6 3.8L2.8 6L7.4 0.8" fill="none" stroke="#4caf6a" stroke-width="0.9"/></svg>
<div class="t str" style="left:755.2px">2,100–2,415</div>
<div class="a" style="left:802.3px;top:298.5px;width:1px;height:41px;background:#f0f0f2"></div>
<div class="t stl" style="left:809.5px;top:301.5px">HEADINGS</div>
<div class="t stn" style="left:815.6px">34</div>
<svg style="left:833px;top:316.8px" width="4" height="5.5" viewBox="0 0 4 5.5"><path d="M2 0.3V5M0.5 3.4L2 5L3.5 3.4" fill="none" stroke="#dc4a43" stroke-width="0.85"/></svg>
<div class="t str" style="left:817.9px">24–29</div>
<div class="a" style="left:854.4px;top:298.5px;width:1px;height:41px;background:#f0f0f2"></div>
<div class="t stl" style="left:861.7px;top:301.5px">PARAGRAPHS</div>
<div class="t stn" style="left:872.9px">59</div>
<svg style="left:890.1px;top:316.3px" width="4" height="5.5" viewBox="0 0 4 5.5"><path d="M2 5.2V0.5M0.5 2.1L2 0.5L3.5 2.1" fill="none" stroke="#dc4a43" stroke-width="0.85"/></svg>
<div class="t str" style="left:874.5px">68–82</div>
<div class="a" style="left:916.4px;top:298.5px;width:1px;height:41px;background:#f0f0f2"></div>
<div class="t stl" style="left:923.7px;top:301.5px">IMAGES</div>
<div class="t stn" style="left:928.3px">4</div>
<svg style="left:939.1px;top:316.3px" width="4" height="5.5" viewBox="0 0 4 5.5"><path d="M2 5.2V0.5M0.5 2.1L2 0.5L3.5 2.1" fill="none" stroke="#dc4a43" stroke-width="0.85"/></svg>
<div class="t str" style="left:931.4px">7–8</div>
<div class="a" style="left:747.3px;top:350px;width:211.5px;height:1px;background:#f0f0f2"></div>

<div class="t" style="left:748.2px;top:365.3px;font-size:9.1px;color:#27272a;letter-spacing:0.05px;-webkit-text-stroke:0.35px #27272a">Terms</div>
<svg style="left:920.5px;top:367px" width="9" height="9" viewBox="0 0 9 9"><path d="M1.2 0.3V8.7M4.5 0.3V8.7M7.8 0.3V8.7M0 5.8H2.4M3.3 2.6H5.7M6.6 5.2H9" stroke="#3f3f46" stroke-width="0.9"/></svg>
<div class="t" style="left:934.2px;top:365.3px;font-size:8.9px;color:#3f3f46;letter-spacing:-0.05px;-webkit-text-stroke:0.3px #3f3f46">Adjust</div>

<div class="a" style="left:747.7px;top:382.4px;width:211.1px;height:24.1px;border:1px solid #e4e4e7;border-radius:5px"></div>
<svg style="left:755.5px;top:389px" width="11" height="11" viewBox="0 0 11 11"><circle cx="4.6" cy="4.6" r="3.9" fill="none" stroke="#27272a" stroke-width="1.1"/><path d="M7.4 7.4L10.3 10.3" stroke="#27272a" stroke-width="1.1"/></svg>
<div class="t" style="left:772.8px;top:388.3px;font-size:8.9px;color:#71717a;letter-spacing:0px">Search</div>

<div class="t" style="left:757.5px;top:414px;font-size:8.8px;color:#7446c4;-webkit-text-stroke:0.2px #7446c4">All</div>
<div class="a bdg" style="left:772.8px;top:414.7px;width:12.8px;background:#7c3aed">76</div>
<div class="t" style="left:805px;top:414px;font-size:8.8px;color:#3f3f46;letter-spacing:-0.05px;-webkit-text-stroke:0.15px #3f3f46">Headings</div>
<div class="a bdg" style="left:848.8px;top:414.7px;width:9.4px;background:#3f3f46">5</div>
<div class="t" style="left:877.6px;top:414px;font-size:8.8px;color:#3f3f46;letter-spacing:-0.1px;-webkit-text-stroke:0.15px #3f3f46">NLP</div>
<div class="a bdg" style="left:899.6px;top:414.7px;width:13.1px;background:#3f3f46">75</div>
<div class="a" style="left:747.7px;top:432.5px;width:211.1px;height:1px;background:#f0f0f2"></div>
<div class="a" style="left:747.7px;top:431.3px;width:48px;height:2px;background:#7c3aed;border-radius:1px"></div>

<div class="a" style="left:749.6px;top:443.5px;width:144.9px;height:16px;border-radius:8px;background:#fffafa;border:1px solid #f9eeee;overflow:hidden"><div class="a" style="left:0;top:0;width:109.3px;height:16px;background:#fcefef"></div></div>
<div class="t" style="left:757px;top:445.5px;font-size:8.5px;color:#8a4242;letter-spacing:0.02px">content marketing what is</div>
<div class="t" style="left:863.8px;top:445.5px;font-size:8.5px;color:#8a4242;letter-spacing:0.1px;-webkit-text-stroke:0.15px #8a4242">2/1</div>
<div class="a" style="left:749.6px;top:464.7px;width:141.5px;height:16px;border-radius:8px;background:#fffafa;border:1px solid #f9eeee;overflow:hidden"><div class="a" style="left:0;top:0;width:80.6px;height:16px;background:#fcefef"></div></div>
<div class="t" style="left:757px;top:466.7px;font-size:8.5px;color:#8a4242;letter-spacing:0.02px">content marketing</div>
<div class="t" style="left:835.1px;top:466.7px;font-size:8.5px;color:#8a4242;letter-spacing:0.1px;-webkit-text-stroke:0.15px #8a4242">66/32–49</div>
<div class="a" style="left:749.6px;top:486.0px;width:160.2px;height:16px;border-radius:8px;background:#fffafa;border:1px solid #f9eeee;overflow:hidden"><div class="a" style="left:0;top:0;width:113.1px;height:16px;background:#fcefef"></div></div>
<div class="t" style="left:757px;top:488.0px;font-size:8.5px;color:#8a4242;letter-spacing:0.02px">content marketing strategy</div>
<div class="t" style="left:867.6px;top:488.0px;font-size:8.5px;color:#8a4242;letter-spacing:0.1px;-webkit-text-stroke:0.15px #8a4242">9/4–7</div>
<div class="a" style="left:749.6px;top:507.2px;width:129.9px;height:16px;border-radius:8px;background:#fffaf1;border:1px solid #faf0de;overflow:hidden"><div class="a" style="left:0;top:0;width:96.1px;height:16px;background:#fce9c6"></div></div>
<div class="t" style="left:757px;top:509.2px;font-size:8.5px;color:#6e5530;letter-spacing:0.02px">social media platforms</div>
<div class="t" style="left:850.6px;top:509.2px;font-size:8.5px;color:#6e5530;letter-spacing:0.1px;-webkit-text-stroke:0.15px #6e5530">1/2–4</div>
<div class="a" style="left:749.6px;top:528.0px;width:115.6px;height:16px;border-radius:8px;background:#f4fcf6;border:1px solid #dff3e5;overflow:hidden"><div class="a" style="left:0;top:0;width:81.7px;height:16px;background:#d2f2db"></div></div>
<div class="t" style="left:757px;top:530.0px;font-size:8.5px;color:#2c5e3b;letter-spacing:0.02px">social media posts</div>
<div class="t" style="left:836.2px;top:530.0px;font-size:8.5px;color:#2c5e3b;letter-spacing:0.1px;-webkit-text-stroke:0.15px #2c5e3b">3/2–5</div>
<div class="a" style="left:740px;top:540px;width:225px;height:11px;overflow:hidden"><div class="a" style="left:-740px;top:-540px;width:983px;height:565px"><div class="a" style="left:749.6px;top:549.0px;width:110.4px;height:16px;border-radius:8px;background:#f4fcf6;border:1px solid #dff3e5;overflow:hidden"><div class="a" style="left:0;top:0;width:75.4px;height:16px;background:#d2f2db"></div></div>
<div class="t" style="left:757px;top:551.0px;font-size:8.5px;color:#2c5e3b;letter-spacing:0.02px">social media marketing</div></div></div>

<svg style="left:880.1px;top:448.5px" width="5" height="6.5" viewBox="0 0 5 6.5"><path d="M2.5 1.2V5.6M1 4.1L2.5 5.6L4 4.1" fill="none" stroke="#dc4a43" stroke-width="0.9"/></svg>
<svg style="left:876.5px;top:469.7px" width="5" height="6.5" viewBox="0 0 5 6.5"><path d="M2.5 1.2V5.6M1 4.1L2.5 5.6L4 4.1" fill="none" stroke="#dc4a43" stroke-width="0.9"/></svg>
<svg style="left:894.6px;top:491.2px" width="5" height="6.5" viewBox="0 0 5 6.5"><path d="M2.5 1.2V5.6M1 4.1L2.5 5.6L4 4.1" fill="none" stroke="#dc4a43" stroke-width="0.9"/></svg>
</div>

<!-- confetti -->
<svg style="left:0;top:0" width="983" height="565" viewBox="0 0 983 565">
<path d="M726 233.2L730.4 234.3" stroke="#fde3e3" stroke-width="3" stroke-linecap="round"/>
<path d="M720.6 249.5L727.6 249.3" stroke="#fdd5d5" stroke-width="3" stroke-linecap="round"/>
<path d="M725.5 268.6L734.7 262.2" stroke="#ff9f9c" stroke-width="3" stroke-linecap="round"/>
<path d="M968.8 196.5L971.3 191.8" stroke="#ffb2ae" stroke-width="3" stroke-linecap="round"/>
<path d="M955.9 244.3L990 251L979.8 280Z" fill="#8a8a8a"/>
</svg>
<div class="a" style="left:979px;top:230px;width:3.2px;height:60px;background:#0b0b0d"></div>

</body></html>
